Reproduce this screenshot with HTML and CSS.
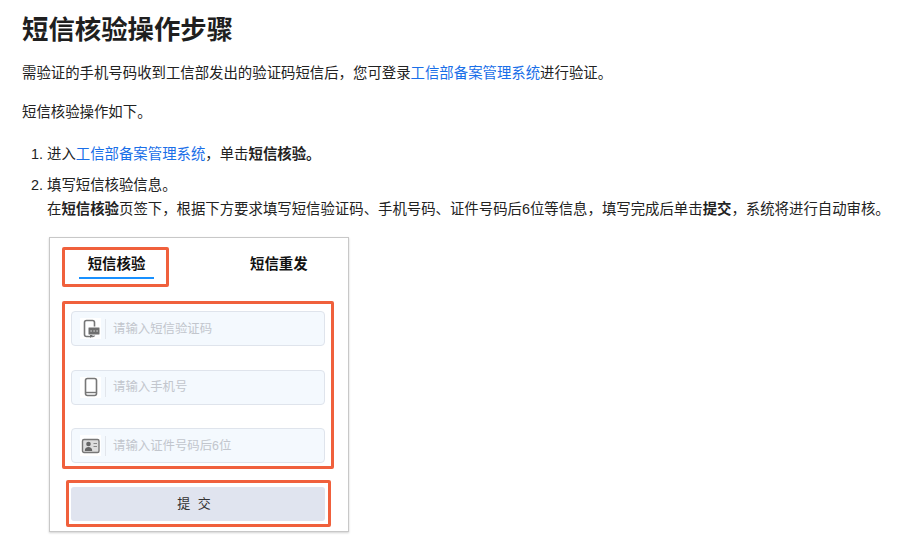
FILE: index.html
```html
<!DOCTYPE html>
<html lang="zh-CN">
<head>
<meta charset="utf-8">
<title>短信核验操作步骤</title>
<link rel="stylesheet" href="styles.css">
</head>
<body>
<h1 class="title">短信核验操作步骤</h1>
<p class="para">需验证的手机号码收到工信部发出的验证码短信后，您可登录<a class="link" href="#">工信部备案管理系统</a>进行验证。</p>
<p class="para">短信核验操作如下。</p>
<ol class="steps">
  <li class="step">进入<a class="link" href="#">工信部备案管理系统</a>，单击<b>短信核验。</b></li>
  <li class="step">填写短信核验信息。<br>在<b>短信核验</b>页签下，根据下方要求填写短信验证码、手机号码、证件号码后6位等信息，填写完成后单击<b>提交</b>，系统将进行自动审核。
    <div class="shot">
      <div class="tabs">
        <div class="tab-box"><span class="tab tab-active">短信核验</span></div>
        <span class="tab tab-other">短信重发</span>
      </div>
      <div class="fields">
        <div class="field">
          <span class="ficon"><svg width="20" height="20" viewBox="0 0 20 20"><rect x="3.500" y="1.500" width="10" height="16" rx="2" fill="none" stroke="#777" stroke-width="1.600"/><rect x="7" y="8" width="12" height="8" rx="1" fill="#6f6f6f" stroke="#fff" stroke-width="1"/><path d="M9 16v3l3-3z" fill="#6f6f6f"/><path d="M9.500 12h1.200M12.500 12h1.200M15.500 12h1.200" stroke="#fff" stroke-width="1.200"/></svg></span>
          <span class="ph">请输入短信验证码</span>
        </div>
        <div class="field">
          <span class="ficon"><svg width="20" height="20" viewBox="0 0 20 20"><rect x="4.500" y="1.500" width="11" height="17" rx="2" fill="none" stroke="#777" stroke-width="1.600"/><path d="M5 15.500h10" stroke="#777" stroke-width="1.400"/></svg></span>
          <span class="ph">请输入手机号</span>
        </div>
        <div class="field">
          <span class="ficon"><svg width="20" height="20" viewBox="0 0 20 20"><rect x="1.500" y="3.500" width="16.500" height="13" rx="1.500" fill="#ddd" stroke="#777" stroke-width="1.400"/><circle cx="7.500" cy="8" r="2.300" fill="#666"/><path d="M3.800 15c0-3 1.600-4 3.700-4s3.700 1 3.700 4z" fill="#666"/><path d="M12.500 7.500h3.500M12.500 10.500h3.500" stroke="#888" stroke-width="1"/></svg></span>
          <span class="ph">请输入证件号码后6位</span>
        </div>
      </div>
      <div class="submit-box"><div class="submit">提 交</div></div>
    </div>
  </li>
</ol>
</body>
</html>
```
FILE: styles.css
```css
html, body {
  margin: 0;
  padding: 0;
  background: #fff;
  overflow: hidden;
}
body {
  padding: 0 0 0 22px;
  height: 546px;
  box-sizing: border-box;
  font-family: "Liberation Sans", "Noto Sans CJK SC", sans-serif;
  font-size: 14.4px;
  line-height: 24px;
  color: #222;
}
.title {
  margin: 0;
  padding-top: 12px;
  height: 44px;
  font-size: 26.4px;
  line-height: 36px;
  font-weight: 700;
  color: #1f1f1f;
}
.para {
  margin: 0 0 15px;
  height: 24px;
  white-space: nowrap;
}
.para:first-of-type { margin-top: 5px; }
.link { color: #1a6fe8; text-decoration: none; }
.steps {
  margin: 18px 0 0;
  padding: 0 0 0 25px;
}
.step {
  margin-bottom: 7px;
  white-space: nowrap;
}
.shot {
  width: 298px;
  height: 293px;
  margin: 16px 0 0 2px;
  border: 1px solid #c8c8c8;
  box-shadow: 0 1px 2px rgba(0,0,0,.18);
  background: #fff;
  white-space: normal;
}
.tabs {
  display: flex;
  align-items: center;
  padding: 9px 0 0 12px;
  height: 40px;
}
.tab-box {
  width: 107px;
  height: 40px;
  box-sizing: border-box;
  border: 3px solid #f0603c;
  border-radius: 2px;
  display: flex;
  align-items: flex-start;
  padding: 2px 0 0 14px;
}
.tab {
  font-size: 14.4px;
  font-weight: 700;
  color: #111;
  line-height: 24px;
}
.tab-active {
  width: 75px;
  height: 25px;
  text-align: center;
  border-bottom: 2px solid #1890ff;
}
.tab-other { margin-left: 81px; margin-top: -7px; }
.fields {
  margin: 14px 0 0 12px;
  width: 272px;
  height: 168px;
  box-sizing: border-box;
  border: 3px solid #f0603c;
  border-radius: 2px;
  padding: 7px 6px 3px;
  display: flex;
  flex-direction: column;
  justify-content: space-between;
}
.field {
  height: 35px;
  box-sizing: border-box;
  border: 1px solid #dfe4ec;
  border-radius: 4px;
  background: #f4f9fe;
  display: flex;
  align-items: center;
  padding-left: 8px;
}
.ficon {
  width: 21px;
  height: 21px;
  background: #fff;
  display: flex;
  align-items: center;
  justify-content: center;
  flex: none;
}
.ph {
  margin-left: 4px;
  padding-left: 7px;
  border-left: 1px solid #e2e6ec;
  font-size: 12.4px;
  line-height: 20px;
  color: #c2c6cd;
}
.submit-box {
  margin: 11px 0 0 16px;
  width: 265px;
  height: 47px;
  box-sizing: border-box;
  border: 3px solid #f0603c;
  border-radius: 2px;
  padding: 4px 3px 4px 2px;
}
.submit {
  height: 34px;
  padding-right: 8px;
  background: #e0e4ef;
  border-radius: 3px;
  text-align: center;
  font-size: 13px;
  word-spacing: 4px;
  line-height: 34px;
  color: #333;
}
```
